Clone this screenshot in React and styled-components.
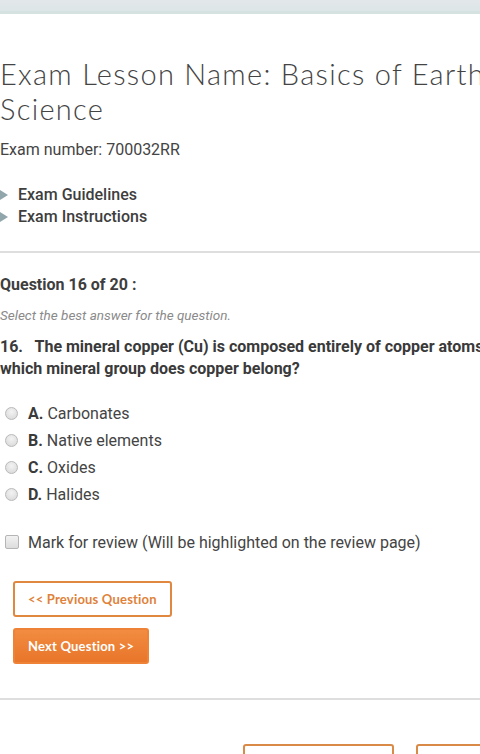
import React from "react";
import styled, { createGlobalStyle } from "styled-components";

const Global = createGlobalStyle`
  html, body { margin: 0; padding: 0; background: #fff; overflow-x: hidden; }
  body { font-family: Roboto, "Liberation Sans", sans-serif; color: #444; }
`;

const TopBar = styled.div`
  height: 11px;
  background: linear-gradient(#e3e7ea, #dde6e6);
  border-bottom: 3px solid #d6e2df;
`;

const Page = styled.div`
  width: 510px;
`;

const Title = styled.h1`
  margin: 42px 0 0;
  font-family: Lato, "Open Sans", sans-serif;
  font-weight: 300;
  font-size: 29px;
  line-height: 35px;
  color: #444;
  letter-spacing: 1.3px;
`;

const ExamNumber = styled.p`
  margin: 14px 0 0;
  font-size: 16px;
  line-height: 20px;
`;

const Toggles = styled.ul`
  list-style: none;
  margin: 24px 0 0;
  padding: 0;
`;

const Toggle = styled.li`
  display: flex;
  align-items: center;
  gap: 10px;
  font-size: 16px;
  font-weight: 500;
  line-height: 22px;
  color: #3e3e3e;
`;

const Arrow = styled.span`
  width: 0;
  height: 0;
  border-top: 5px solid transparent;
  border-bottom: 5px solid transparent;
  border-left: 8px solid #91a6ab;
`;

const Rule = styled.hr`
  margin: ${(p) => p.$top}px 0 0;
  border: none;
  border-top: 2px solid #dedede;
`;

const QuestionHead = styled.h2`
  margin: 22px 0 0;
  font-size: 16px;
  font-weight: 700;
  line-height: 20px;
  color: #3e3e3e;
`;

const Hint = styled.p`
  margin: 12px 0 0;
  font-size: 13.5px;
  font-style: italic;
  color: #8a8a8a;
  line-height: 16px;
`;

const QuestionText = styled.p`
  margin: 13px 0 0;
  font-size: 16px;
  font-weight: 700;
  line-height: 22px;
  color: #3a3a3a;
  white-space: pre-wrap;
`;

const Options = styled.div`
  margin-top: 22px;
  display: flex;
  flex-direction: column;
  gap: 5px;
`;

const Option = styled.label`
  display: flex;
  align-items: center;
  height: 22px;
  font-size: 16px;
  color: #444;
  b { font-weight: 700; margin-right: 4px; color: #3a3a3a; }
`;

const Radio = styled.span`
  width: 13px;
  height: 13px;
  margin: 0 10px 0 5px;
  border-radius: 50%;
  border: 1px solid #b9b9b9;
  background: radial-gradient(circle at 50% 35%, #f3f3f3, #d6d6d6);
  box-sizing: border-box;
`;

const Review = styled.label`
  margin-top: 26px;
  display: flex;
  align-items: center;
  font-size: 16px;
  color: #444;
  height: 22px;
`;

const Check = styled.span`
  width: 14px;
  height: 14px;
  margin: 0 9px 0 5px;
  border-radius: 2px;
  border: 1px solid #b5b5b5;
  background: linear-gradient(#f2f2f2, #dcdcdc);
  box-sizing: border-box;
`;

const Buttons = styled.div`
  margin: 28px 0 0 13px;
  display: flex;
  flex-direction: column;
  align-items: flex-start;
  gap: 11px;
`;

const Button = styled.button`
  height: 36px;
  padding: 0 13px;
  border-radius: 3px;
  font-family: Lato, "Open Sans", sans-serif;
  font-weight: 700;
  font-size: 13px;
  letter-spacing: 0.2px;
  border: 2px solid;
  color: ${(p) => (p.$primary ? "#fff" : "#e0823a")};
  background: ${(p) => (p.$primary ? "linear-gradient(#f28c40, #e8752a)" : "#fff")};
  border-color: ${(p) => (p.$primary ? "#ee8236" : "#e0883f")};
  box-sizing: border-box;
  cursor: pointer;
`;

const Footer = styled.div`
  margin: 44px 0 0 243px;
  display: flex;
  gap: 22px;
`;

const FooterBox = styled.div`
  flex: 0 0 auto;
  width: ${(p) => p.$w}px;
  height: 30px;
  border: 2px solid #d98a46;
  border-radius: 3px;
  box-sizing: border-box;
`;

const options = [
  ["A.", "Carbonates"],
  ["B.", "Native elements"],
  ["C.", "Oxides"],
  ["D.", "Halides"],
];

export default function App() {
  return (
    <>
      <Global />
      <TopBar />
      <Page>
        <Title>Exam Lesson Name: Basics of Earth Science</Title>
        <ExamNumber>Exam number: 700032RR</ExamNumber>
        <Toggles>
          <Toggle><Arrow />Exam Guidelines</Toggle>
          <Toggle><Arrow />Exam Instructions</Toggle>
        </Toggles>
        <Rule $top={23} />
        <QuestionHead>Question 16 of 20 :</QuestionHead>
        <Hint>Select the best answer for the question.</Hint>
        <QuestionText>{"16.   The mineral copper (Cu) is composed entirely of copper atoms. To which mineral group does copper belong?"}</QuestionText>
        <Options>
          {options.map(([k, v]) => (
            <Option key={k}><Radio /><b>{k}</b>{v}</Option>
          ))}
        </Options>
        <Review><Check />Mark for review (Will be highlighted on the review page)</Review>
        <Buttons>
          <Button>&lt;&lt; Previous Question</Button>
          <Button $primary>Next Question &gt;&gt;</Button>
        </Buttons>
        <Rule $top={34} />
        <Footer>
          <FooterBox $w={151} />
          <FooterBox $w={151} />
        </Footer>
      </Page>
    </>
  );
}
